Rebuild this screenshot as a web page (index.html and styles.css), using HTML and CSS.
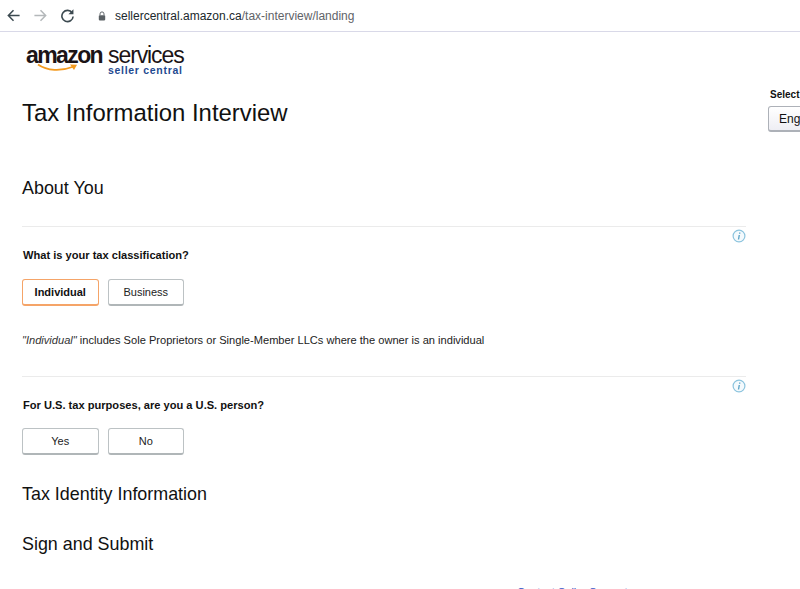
FILE: index.html
```html
<!DOCTYPE html>
<html lang="en">
<head>
<meta charset="utf-8">
<title>Tax Information Interview</title>
<link rel="stylesheet" href="styles.css">
</head>
<body>
<div class="viewport">
  <nav class="chrome">
    <svg class="nav-icon" viewBox="0 0 16 16"><path d="M14.5 8H2.5M8 2.500 2.500 8 8 13.500" fill="none" stroke="#3c4a50" stroke-width="1.600"/></svg>
    <svg class="nav-icon" viewBox="0 0 16 16"><path d="M1.500 8H13.500M8 2.500 13.500 8 8 13.500" fill="none" stroke="#b4b8ba" stroke-width="1.600"/></svg>
    <svg class="nav-icon" viewBox="0 0 16 16"><path d="M13 5.200A6 6 0 1 0 14 9" fill="none" stroke="#3c4a50" stroke-width="1.700"/><path d="M14.300 1.300V6.600H9Z" fill="#3c4a50"/></svg>
    <svg class="lock" viewBox="0 0 10 12"><path d="M2.500 5V3.400a2.500 2.500 0 0 1 5 0V5" fill="none" stroke="#5a6064" stroke-width="1.200"/><rect x="1" y="5" width="8" height="6.500" rx="1" fill="#5a6064"/></svg>
    <div class="url"><span class="host">sellercentral.amazon.ca</span>/tax-interview/landing</div>
  </nav>
  <main class="page">
    <div class="logo">
      <div class="logo-top"><span class="logo-amazon">amazon</span><span class="logo-services">services</span></div>
      <svg class="logo-smile" viewBox="0 0 42 10"><path d="M1 1.500C10 8 24 8.500 37 3.500" fill="none" stroke="#f39a1f" stroke-width="1.800"/><path d="M33 1.500 40 1.800 37 7Z" fill="#f39a1f"/></svg>
      <div class="logo-sub">seller central</div>
    </div>
    <div class="title-row">
      <h1 class="title">Tax Information Interview</h1>
      <div class="lang">
        <div class="lang-label">Select Language</div>
        <button class="lang-btn">English</button>
      </div>
    </div>
    <h2 class="heading about">About You</h2>
    <section class="block first">
      <svg class="info" viewBox="0 0 14 14"><circle cx="7" cy="7" r="5.900" fill="#f4fafd" stroke="#8cc4de" stroke-width="1.200"/><path d="M7.700 3.400v1.300M7.300 6 6.500 10.500" fill="none" stroke="#5fa5c8" stroke-width="1.400"/></svg>
      <div class="question">What is your tax classification?</div>
      <div class="choices">
        <button class="choice selected">Individual</button>
        <button class="choice">Business</button>
      </div>
      <p class="note"><em>"Individual"</em> includes Sole Proprietors or Single-Member LLCs where the owner is an individual</p>
    </section>
    <section class="block second">
      <svg class="info" viewBox="0 0 14 14"><circle cx="7" cy="7" r="5.900" fill="#f4fafd" stroke="#8cc4de" stroke-width="1.200"/><path d="M7.700 3.400v1.300M7.300 6 6.500 10.500" fill="none" stroke="#5fa5c8" stroke-width="1.400"/></svg>
      <div class="question">For U.S. tax purposes, are you a U.S. person?</div>
      <div class="choices">
        <button class="choice">Yes</button>
        <button class="choice">No</button>
      </div>
    </section>
    <h2 class="heading identity">Tax Identity Information</h2>
    <h2 class="heading sign">Sign and Submit</h2>
    <footer class="footer"><a class="footer-link">Contact Seller Support</a></footer>
  </main>
</div>
</body>
</html>
```
FILE: styles.css
```css
html, body { margin: 0; padding: 0; background: #fff; }
body { font-family: "Liberation Sans", Arial, sans-serif; color: #111; }
.viewport { width: 800px; height: 589px; overflow: hidden; }

.chrome { display: flex; align-items: center; height: 31px; border-bottom: 1px solid #d9d9e8; padding-left: 6px; }
.nav-icon { width: 15px; height: 15px; margin-right: 12px; flex: none; }
.lock { width: 8px; height: 10px; margin-left: 11px; margin-right: 9px; flex: none; }
.url { font-size: 12px; color: #5f6368; }
.host { color: #20282c; }

.page { padding-left: 22px; width: 900px; }

.logo { position: relative; width: 170px; height: 42px; padding-top: 11px; margin-left: 4px; }
.logo-top { display: flex; align-items: baseline; line-height: 24px; white-space: nowrap; }
.logo-amazon { font-size: 23px; font-weight: 700; letter-spacing: -1.6px; color: #1c1416; margin-right: 6px; }
.logo-services { font-size: 23px; letter-spacing: -1.1px; color: #1c1416; }
.logo-smile { position: absolute; left: 11px; top: 31px; width: 42px; height: 10px; }
.logo-sub { position: absolute; left: 82px; top: 32px; font-size: 10.500px; font-weight: 700; letter-spacing: 0.7px; color: #1f4a90; white-space: nowrap; }

.title-row { display: flex; justify-content: space-between; width: 810px; height: 50px; padding-top: 5px; box-sizing: border-box; margin-top: 8px; }
.title { margin: 0; font-size: 23.900px; font-weight: 400; line-height: 30px; }
.lang { width: 64px; flex: none; }
.lang-label { font-size: 10px; font-weight: 700; line-height: 12px; white-space: nowrap; margin-left: 2px; margin-top: -9px; }
.lang-btn { display: block; width: 100px; height: 26px; margin-top: 5px; padding: 0 0 0 10px; text-align: left; font: 12px "Liberation Sans", Arial, sans-serif; color: #111; background: linear-gradient(#fff, #eeeef4); border: 1px solid #adb1b8; border-bottom-width: 2px; border-radius: 3px; }

.heading { margin: 0; font-size: 17.900px; font-weight: 400; line-height: 22px; color: #111; }
.about { padding-top: 34px; }

.block { position: relative; width: 724px; border-top: 1px solid #ebebeb; box-sizing: border-box; }
.first { margin-top: 27px; height: 150px; }
.second { height: 107px; }
.info { position: absolute; right: 0; top: 2px; width: 14px; height: 14px; }
.question { margin-left: 1px; padding-top: 21px; font-size: 11.100px; font-weight: 700; line-height: 14px; }
.choices { display: flex; gap: 9px; margin-top: 17px; }
.second .choices { margin-top: 16px; }
.choice { width: 76.500px; height: 27px; padding: 0; background: #fff; border: 1px solid #bcc2c4; border-bottom: 2px solid #b0b6b8; border-radius: 3px; font: 11px "Liberation Sans", Arial, sans-serif; color: #222; }
.choice.selected { border: 1px solid #f5a468; border-bottom-width: 2px; font-weight: 700; color: #111; }
.note { margin: 27px 0 0; font-size: 11.100px; line-height: 14px; color: #222; }
.note em { color: #333; }

.identity { margin-top: 0; }
.sign { margin-top: 28px; }
.footer { padding-left: 495px; margin-top: 27px; }
.footer-link { font-size: 11px; line-height: 14px; color: #2f4fc4; white-space: nowrap; }
```
